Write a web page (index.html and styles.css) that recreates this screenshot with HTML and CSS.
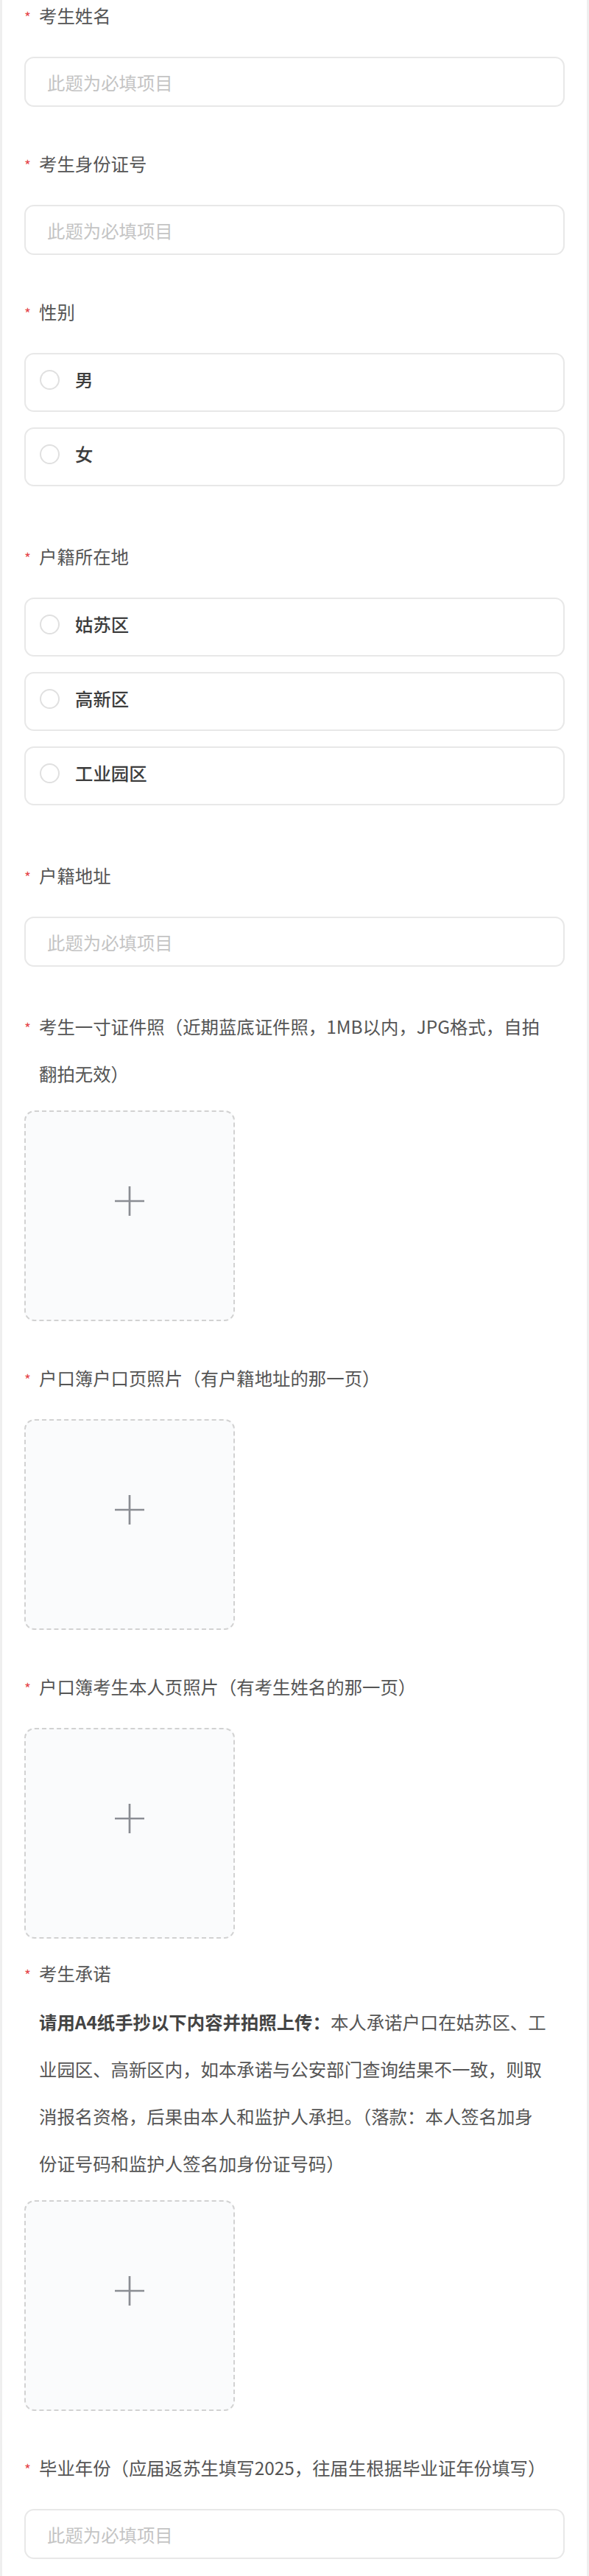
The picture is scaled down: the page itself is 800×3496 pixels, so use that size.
FILE: index.html
```html
<!DOCTYPE html>
<html lang="zh-CN">
<head>
<meta charset="utf-8">
<title>报名表</title>
<link rel="stylesheet" href="styles.css">
</head>
<body>
<div class="page">
  <form class="form">
    <div class="item">
      <div class="label"><span class="star">*</span><span class="label-text">考生姓名</span></div>
      <input class="field" type="text" placeholder="此题为必填项目">
    </div>

    <div class="item">
      <div class="label"><span class="star">*</span><span class="label-text">考生身份证号</span></div>
      <input class="field" type="text" placeholder="此题为必填项目">
    </div>

    <div class="item">
      <div class="label"><span class="star">*</span><span class="label-text">性别</span></div>
      <div class="options">
        <div class="option"><span class="radio"></span><span class="option-text">男</span></div>
        <div class="option"><span class="radio"></span><span class="option-text">女</span></div>
      </div>
    </div>

    <div class="item">
      <div class="label"><span class="star">*</span><span class="label-text">户籍所在地</span></div>
      <div class="options">
        <div class="option"><span class="radio"></span><span class="option-text">姑苏区</span></div>
        <div class="option"><span class="radio"></span><span class="option-text">高新区</span></div>
        <div class="option"><span class="radio"></span><span class="option-text">工业园区</span></div>
      </div>
    </div>

    <div class="item item-loose">
      <div class="label"><span class="star">*</span><span class="label-text">户籍地址</span></div>
      <input class="field" type="text" placeholder="此题为必填项目">
    </div>

    <div class="item">
      <div class="label label-multi"><span class="star">*</span><span class="label-text">考生一寸证件照（近期蓝底证件照，1MB以内，JPG格式，自拍翻拍无效）</span></div>
      <div class="upload"><svg class="plus" width="42" height="42" viewBox="0 0 42 42"><path d="M21 1V41M1 21H41" stroke="#8a8d93" stroke-width="2.7" fill="none"/></svg></div>
    </div>

    <div class="item">
      <div class="label"><span class="star">*</span><span class="label-text">户口簿户口页照片（有户籍地址的那一页）</span></div>
      <div class="upload"><svg class="plus" width="42" height="42" viewBox="0 0 42 42"><path d="M21 1V41M1 21H41" stroke="#8a8d93" stroke-width="2.7" fill="none"/></svg></div>
    </div>

    <div class="item item-tight">
      <div class="label"><span class="star">*</span><span class="label-text">户口簿考生本人页照片（有考生姓名的那一页）</span></div>
      <div class="upload"><svg class="plus" width="42" height="42" viewBox="0 0 42 42"><path d="M21 1V41M1 21H41" stroke="#8a8d93" stroke-width="2.7" fill="none"/></svg></div>
    </div>

    <div class="item">
      <div class="label label-flush"><span class="star">*</span><span class="label-text">考生承诺</span></div>
      <p class="note"><strong class="note-strong">请用A4纸手抄以下内容并拍照上传：</strong>本人承诺户口在姑苏区、工业园区、高新区内，如本承诺与公安部门查询结果不一致，则取消报名资格，后果由本人和监护人承担。（落款：本人签名加身份证号码和监护人签名加身份证号码）</p>
      <div class="upload"><svg class="plus" width="42" height="42" viewBox="0 0 42 42"><path d="M21 1V41M1 21H41" stroke="#8a8d93" stroke-width="2.7" fill="none"/></svg></div>
    </div>

    <div class="item">
      <div class="label"><span class="star">*</span><span class="label-text">毕业年份（应届返苏生填写2025，往届生根据毕业证年份填写）</span></div>
      <input class="field" type="text" placeholder="此题为必填项目">
    </div>
  </form>
</div>
</body>
</html>
```
FILE: styles.css
```css
* {
  box-sizing: border-box;
}

html, body {
  margin: 0;
  padding: 0;
}

body {
  background: #efefef;
  font-family: "Noto Sans CJK SC", "Noto Sans", sans-serif;
  font-size: 24.4px;
  color: #555555;
}

.page {
  margin: 0 3px;
  min-height: 3496px;
  background: #ffffff;
  padding: 0 30px 38px;
  overflow: hidden;
}

.form {
  display: flex;
  flex-direction: column;
}

.item {
  margin-bottom: 45px;
}

.item:first-child .label {
  margin-top: -11px;
}

.item-loose {
  margin-bottom: 49px;
}

.item-tight {
  margin-bottom: 15px;
}

.item:last-child {
  margin-bottom: 0;
}

.label {
  display: flex;
  align-items: baseline;
  line-height: 64px;
  margin-bottom: 22px;
  padding-right: 20px;
}

.label-multi {
  margin-bottom: 18px;
}

.label-flush {
  margin-bottom: 0;
}

.star {
  flex: 0 0 20px;
  color: #e5484d;
  font-size: 19px;
  line-height: 64px;
}

.label-text {
  flex: 1;
  color: #555555;
}

.field {
  display: block;
  width: 100%;
  height: 68px;
  border: 2px solid #e8e8e8;
  border-radius: 13px;
  padding: 0 0 0 29px;
  font-family: inherit;
  font-size: 24.4px;
  color: #333333;
  background: #ffffff;
  outline: none;
}

.field::placeholder {
  color: #c4c4c4;
}

.options {
  display: flex;
  flex-direction: column;
  gap: 21px;
  padding-bottom: 18px;
}

.option {
  display: flex;
  align-items: center;
  gap: 21px;
  height: 80px;
  padding: 0 19px 8px;
  border: 2px solid #e8e8e8;
  border-radius: 13px;
  background: #ffffff;
}

.radio {
  flex: 0 0 27px;
  width: 27px;
  height: 27px;
  border: 2px solid #e0e0e0;
  border-radius: 50%;
}

.option-text {
  color: #3d3d3d;
  font-weight: 500;
  line-height: 36px;
}

.upload {
  width: 286px;
  height: 286px;
  border: 2px dashed #d2d2d2;
  border-radius: 14px;
  background: #fafbfc;
  display: flex;
  justify-content: center;
  align-items: flex-start;
  padding-top: 100px;
}

.plus {
  display: block;
}

.note {
  margin: 0 0 18px;
  padding: 0 20px;
  line-height: 64px;
  color: #555555;
}

.note-strong {
  font-weight: 700;
  color: #444444;
}
```
